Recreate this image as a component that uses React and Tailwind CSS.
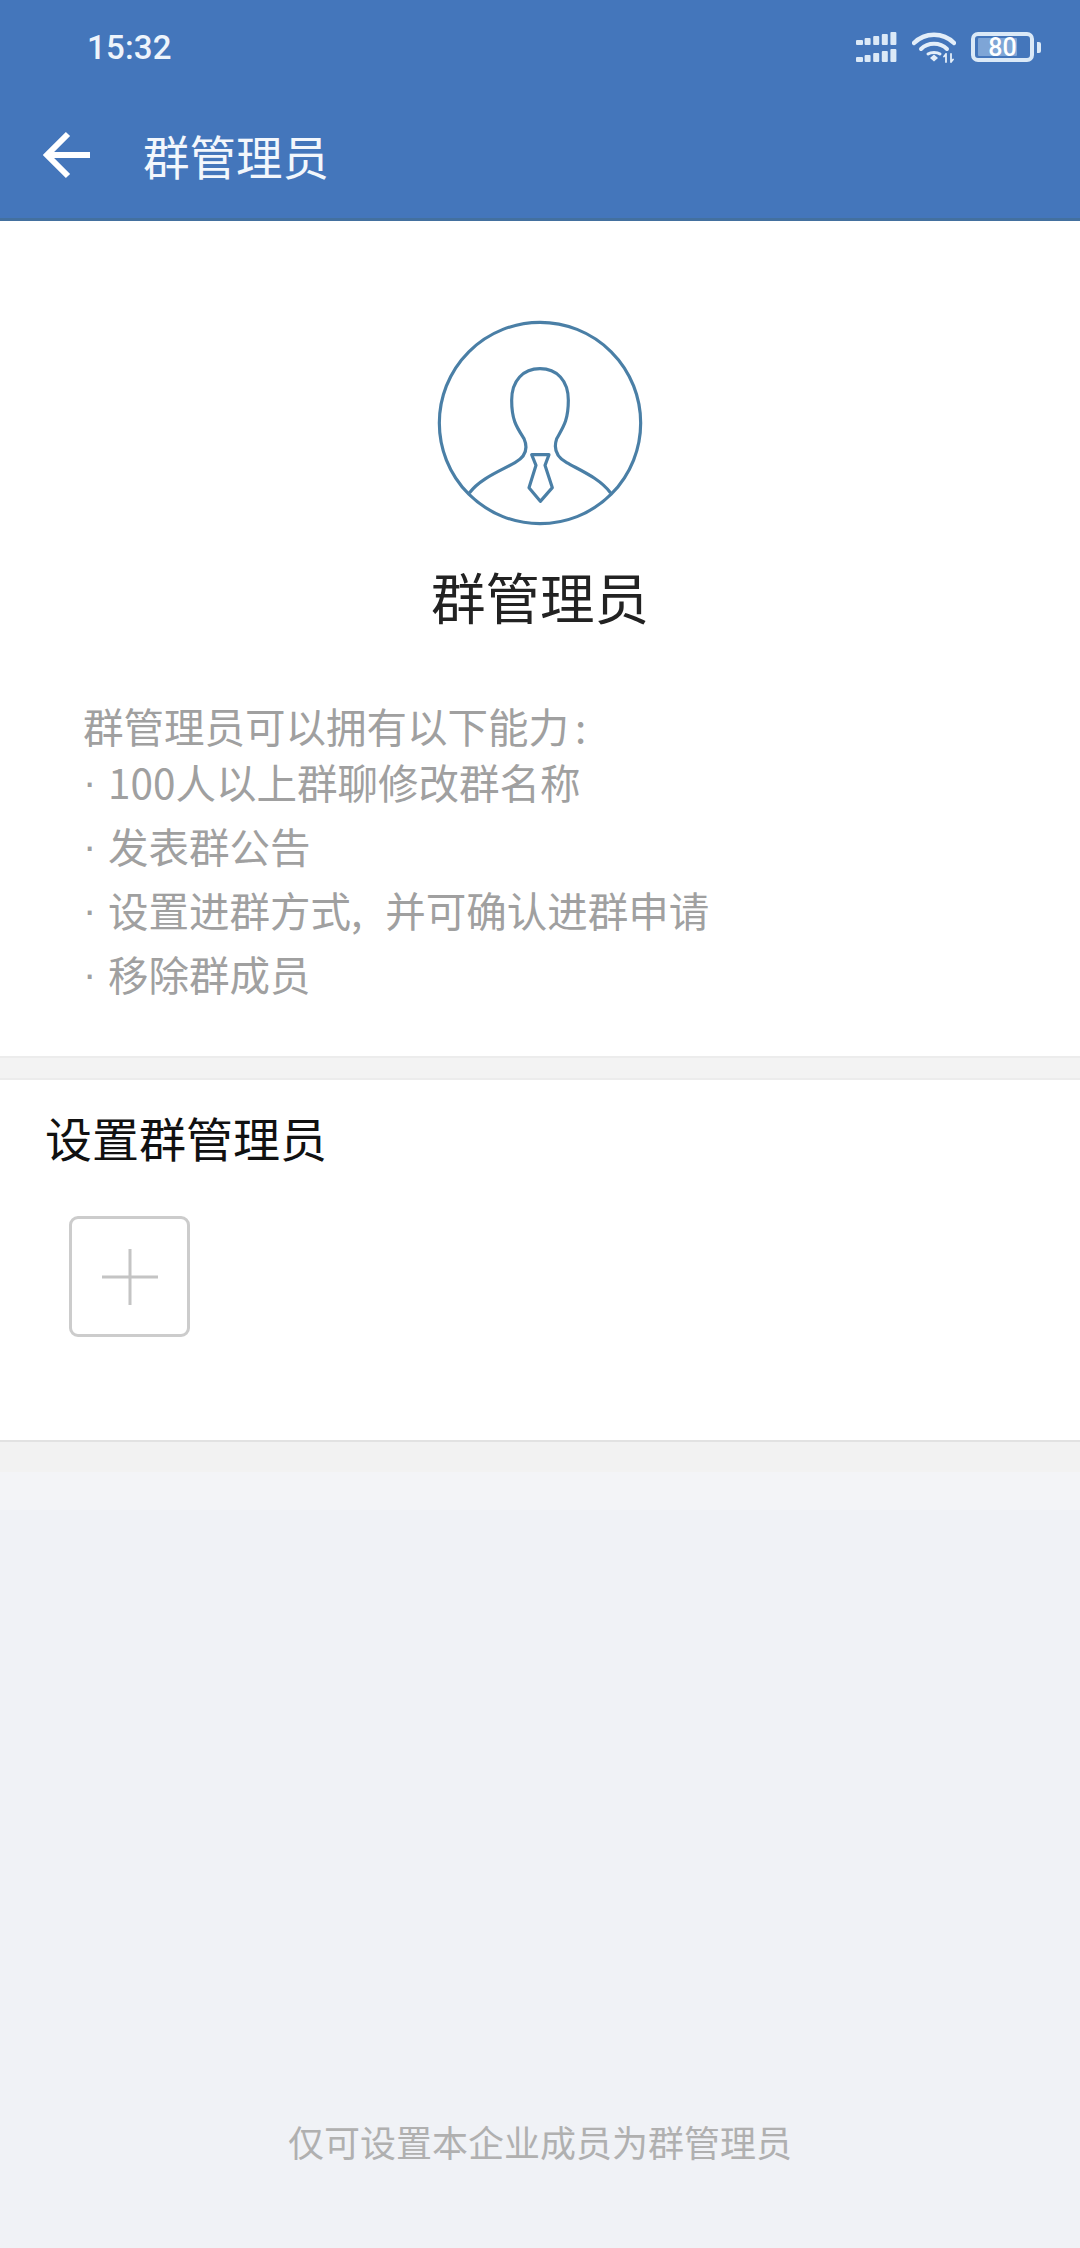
import React from "react";

const cjk = { fontFamily: '"Noto Sans CJK SC", "Noto Sans", sans-serif' };

function Signal() {
  const heights = [5, 7, 9, 11, 13];
  const row = (y) =>
    heights.map((h, i) => (
      <rect key={i} x={i * 8.6} y={y + 13 - h} width={i === 0 ? 7 : 6} height={h} rx="1" fill="#dbe9f7" />
    ));
  return (
    <svg width="41" height="30" viewBox="0 0 41 30">
      {row(0)}
      {row(17)}
    </svg>
  );
}

function Wifi() {
  return (
    <svg width="44" height="31" viewBox="0 0 44 31" fill="none" stroke="#e3eef9" strokeLinecap="round">
      <path d="M2 11 C13 0 31 0 42 11" strokeWidth="4.5" />
      <path d="M9 17 C16 10 28 10 35 17" strokeWidth="4" />
      <path d="M16 22 C19 20 25 20 28 22" strokeWidth="3" />
      <path d="M18 26 L22 22.5 L26 26 L22 29.5 Z" fill="#e3eef9" stroke="none" />
      <path d="M34 22 V30 M34 22 L32 24.5 M39 22 V30 M39 30 L41 27.5" strokeWidth="1.8" />
    </svg>
  );
}

function Battery() {
  return (
    <div className="flex items-center gap-[3px]">
      <div className="relative flex h-[30px] w-[63px] items-center justify-center rounded-[7px] border-[4px] border-[#dbe9f7]">
        <div className="absolute top-[2px] bottom-[2px] left-[3px] w-[39px] rounded-[1px] bg-[#7ea5d6]" />
        <span className="relative text-[25px] leading-none font-medium text-white" style={{ fontFamily: "Roboto, sans-serif" }}>
          80
        </span>
      </div>
      <div className="h-[11px] w-[4px] rounded-r-[2px] bg-[#dbe9f7]" />
    </div>
  );
}

function Avatar() {
  return (
    <svg width="206" height="206" viewBox="111 59 618 618" fill="none" stroke="#4a7fa6" strokeWidth="9.5" strokeLinejoin="round">
      <circle cx="420" cy="368" r="302" />
      <path d="M208 578 C240 535 300 512 345 487 C375 470 385 445 372 415 C350 380 335 360 335 300 C335 240 370 205 420 205 C470 205 505 240 505 300 C505 360 490 380 470 415 C460 445 470 470 500 487 C545 512 600 535 632 578" />
      <path d="M395 463 L447 463 L435 495 L457 562 L421 603 L387 562 L408 495 Z" />
    </svg>
  );
}

function Bullet({ children, className }) {
  return (
    <div className={`flex h-[64px] items-center ${className || ""}`}>
      <span className="w-[25px] text-[40px] leading-none" style={{ fontFamily: '"Liberation Sans", sans-serif' }}>·</span>
      <span>{children}</span>
    </div>
  );
}

export default function App() {
  return (
    <div className="flex h-[2248px] w-[1080px] flex-col overflow-hidden bg-[#f0f2f6]" style={cjk}>
      <header className="flex h-[221px] flex-col border-b-[3px] border-[#43709f] bg-[#4476bb] text-white">
        <div className="flex h-[94px] items-center justify-between pr-[39px] pl-[87px]">
          <span className="text-[33px] leading-none font-medium tracking-[0.2px] text-[#eef4fb]" style={{ fontFamily: "Roboto, sans-serif" }}>
            15:32
          </span>
          <div className="flex items-center gap-[15px]">
            <Signal />
            <Wifi />
            <Battery />
          </div>
        </div>
        <div className="flex h-[124px] items-center pb-[2px] pl-[43px]">
          <svg width="48" height="48" viewBox="0 0 48 48" fill="none" stroke="white" strokeWidth="6">
            <path d="M3 24 H47 M25 3 L4 24 L25 45" />
          </svg>
          <span className="ml-[52px] text-[46.5px] leading-none text-[#f3f7fc]">群管理员</span>
        </div>
      </header>

      <section className="flex h-[835px] flex-col bg-white">
        <div className="flex justify-center pt-[99px]">
          <Avatar />
        </div>
        <h1 className="mt-[38px] text-center text-[54.5px] leading-[64px] font-normal text-[#222222]">群管理员</h1>
        <div className="mt-[74px] pl-[83px] text-[40.5px] text-[#a0a0a0]">
          <div className="flex h-[48px] items-center">群管理员可以拥有以下能力<span className="ml-[6px]">:</span></div>
          <Bullet>100人以上群聊修改群名称</Bullet>
          <Bullet>发表群公告</Bullet>
          <Bullet className="[word-spacing:14px]">设置进群方式, 并可确认进群申请</Bullet>
          <Bullet>移除群成员</Bullet>
        </div>
      </section>

      <div className="h-[24px] border-y-2 border-[#ececec] bg-[#f3f3f3]" />

      <section className="flex h-[362px] flex-col border-b-2 border-[#e2e2e2] bg-white pt-[27px]">
        <h2 className="pl-[45px] text-[47px] leading-[60px] font-normal text-[#111111]">设置群管理员</h2>
        <div className="mt-[49px] ml-[69px] flex h-[121px] w-[121px] items-center justify-center rounded-[9px] border-[3px] border-[#cccccc]">
          <svg width="56" height="56" viewBox="0 0 56 56" stroke="#c4c4c4" strokeWidth="3">
            <path d="M0 28 H56 M28 0 V56" />
          </svg>
        </div>
      </section>

      <div className="h-[30px] bg-[#f2f2f2]" />
      <div className="h-[38px] bg-[#f3f4f7]" />
      <div className="flex flex-1 flex-col justify-end pb-[83px]">
        <p className="text-center text-[36px] leading-[48px] text-[#b0b0b0]">仅可设置本企业成员为群管理员</p>
      </div>
    </div>
  );
}
